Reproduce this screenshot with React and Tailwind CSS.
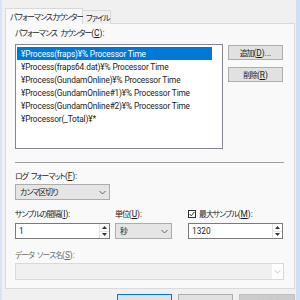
import React from 'react';

const items = [
  '¥Process(fraps)¥% Processor Time',
  '¥Process(fraps64.dat)¥% Processor Time',
  '¥Process(GundamOnline)¥% Processor Time',
  '¥Process(GundamOnline#1)¥% Processor Time',
  '¥Process(GundamOnline#2)¥% Processor Time',
  '¥Processor(_Total)¥*',
];

// Japanese runs: condensed like Meiryo UI
function J({ children }) {
  return (
    <span className="font-['Noto_Sans_CJK_JP',sans-serif] [font-feature-settings:'palt'] text-[7.8px] tracking-[-0.9px]">
      {children}
    </span>
  );
}

const Gap = () => <span className="inline-block w-[3px]" />;

function Chevron({ color = '#555' }) {
  return (
    <svg width="7" height="5" viewBox="0 0 7 5" className="shrink-0">
      <path d="M0.5 1 L3.5 4 L6.5 1" fill="none" stroke={color} strokeWidth="0.9" />
    </svg>
  );
}

function Spin() {
  return (
    <div className="flex flex-col w-[10px] h-full border-l border-[#e3e3e3]">
      <div className="flex-1 flex items-center justify-center border-b border-[#e3e3e3]">
        <svg width="5" height="3" viewBox="0 0 5 3"><path d="M0 3 L2.5 0 L5 3 Z" fill="#333" /></svg>
      </div>
      <div className="flex-1 flex items-center justify-center">
        <svg width="5" height="3" viewBox="0 0 5 3"><path d="M0 0 L2.5 3 L5 0 Z" fill="#333" /></svg>
      </div>
    </div>
  );
}

export default function App() {
  return (
    <div className="w-[300px] h-[300px] bg-[#f0f0f0] overflow-hidden flex border-l-[2px] border-l-[#d6e4f3] border-r-[4px] border-r-[#cfe0f3] font-['Roboto','Noto_Sans_CJK_JP',sans-serif] text-[8.3px] leading-[12px] text-[#1a1a1a] whitespace-nowrap">
      <div className="flex-1 flex flex-col pl-[3px] pr-[1px] pt-[8px]">
        {/* tabs */}
        <div className="shrink-0 flex items-end h-[16px] relative z-10">
          <div className="h-[16px] w-[78px] bg-[#f9f9f9] border border-b-0 border-[#d9d9d9] flex items-center pl-[4px]">
            <J>パフォーマンス</J><Gap /><J>カウンター</J>
          </div>
          <div className="h-[14px] w-[28px] bg-[#f0f0f0] border border-l-0 border-b-0 border-[#d9d9d9] flex items-center pl-[3px]">
            <J>ファイル</J>
          </div>
        </div>
        {/* panel */}
        <div className="shrink-0 -mt-[1px] h-[266px] bg-[#f9f9f9] border border-[#d9d9d9] flex flex-col pl-[9px] pr-[8px]">
          <div className="mt-[3px] h-[12px]">
            <J>パフォーマンス</J><Gap /><J>カウンター</J>(<u>C</u>):
          </div>
          <div className="mt-[5px] flex gap-[5px]">
            <div className="w-[208px] h-[105px] bg-white border border-[#828790] pt-[2px] pl-[1px] tracking-[-0.15px]">
              {items.map((t, i) => (
                <div
                  key={i}
                  className={
                    i === 0
                      ? 'h-[13px] w-[195px] bg-[#0078d7] text-white pl-[4px] flex items-center'
                      : 'h-[13px] pl-[4px] flex items-center'
                  }
                >
                  {t}
                </div>
              ))}
            </div>
            <div className="flex flex-col gap-[7px] pt-[1px]">
              <div className="w-[55px] h-[15px] bg-[#e1e1e1] border border-[#adadad] flex items-center justify-center">
                <J>追加</J>(<u>D</u>)...
              </div>
              <div className="w-[55px] h-[15px] bg-[#e1e1e1] border border-[#adadad] flex items-center justify-center">
                <J>削除</J>(<u>R</u>)
              </div>
            </div>
          </div>
          <div className="mt-[13px] h-[1px] w-[269px] bg-[#a0a0a0]" />
          <div className="mt-[7px] h-[12px]">
            <J>ログ</J><Gap /><J>フォーマット</J>(<u>F</u>):
          </div>
          <div className="mt-[2px] w-[95px] h-[16px] bg-[#e5e5e5] border border-[#acacac] flex items-center justify-between pl-[4px] pr-[3px]">
            <J>カンマ区切り</J>
            <Chevron />
          </div>
          <div className="mt-[8px] flex h-[12px]">
            <div className="w-[100px]"><J>サンプルの間隔</J>(<u>I</u>):</div>
            <div className="w-[73px]"><J>単位</J>(<u>U</u>):</div>
            <div className="flex items-center gap-[3px]">
              <div className="w-[8px] h-[8px] border border-[#333] bg-white flex items-center justify-center">
                <svg width="6" height="6" viewBox="0 0 6 6">
                  <path d="M0.6 3 L2.3 4.8 L5.4 0.9" fill="none" stroke="#222" strokeWidth="0.9" />
                </svg>
              </div>
              <span><J>最大サンプル</J>(<u>M</u>):</span>
            </div>
          </div>
          <div className="mt-[3px] flex h-[16px]">
            <div className="w-[95px] h-[16px] bg-white border border-[#7a7a7a] flex items-stretch">
              <div className="flex-1 pl-[3px] flex items-center">1</div>
              <Spin />
            </div>
            <div className="ml-[5px] w-[57px] h-[16px] bg-[#e5e5e5] border border-[#acacac] flex items-center justify-between pl-[4px] pr-[3px]">
              <J>秒</J>
              <Chevron />
            </div>
            <div className="ml-[16px] w-[95px] h-[16px] bg-white border border-[#7a7a7a] flex items-stretch">
              <div className="flex-1 pl-[3px] flex items-center">1320</div>
              <Spin />
            </div>
          </div>
          <div className="mt-[10px] h-[12px] text-[#6d6d6d]">
            <J>データ</J><Gap /><J>ソース名</J>(<u>S</u>):
          </div>
          <div className="mt-[2px] w-[269px] h-[17px] bg-[#f0f0f0] border border-[#d9d9d9] flex items-stretch justify-end">
            <div className="w-[11px] bg-white flex items-center justify-center">
              <Chevron color="#bbb" />
            </div>
          </div>
        </div>
        {/* dialog buttons, cut off by the bottom edge */}
        <div className="shrink-0 mt-[5px] flex gap-[6px] pl-[112px]">
          <div className="w-[55px] h-[19px] bg-[#e1e1e1] border border-[#0078d7] flex items-center justify-center">OK</div>
          <div className="w-[55px] h-[19px] bg-[#e1e1e1] border border-[#adadad] flex items-center justify-center"><J>キャンセル</J></div>
          <div className="w-[56px] h-[19px] bg-[#cccccc] border border-[#bfbfbf] flex items-center justify-center text-[#8d8d8d]"><J>適用</J>(<u>A</u>)</div>
        </div>
      </div>
    </div>
  );
}
